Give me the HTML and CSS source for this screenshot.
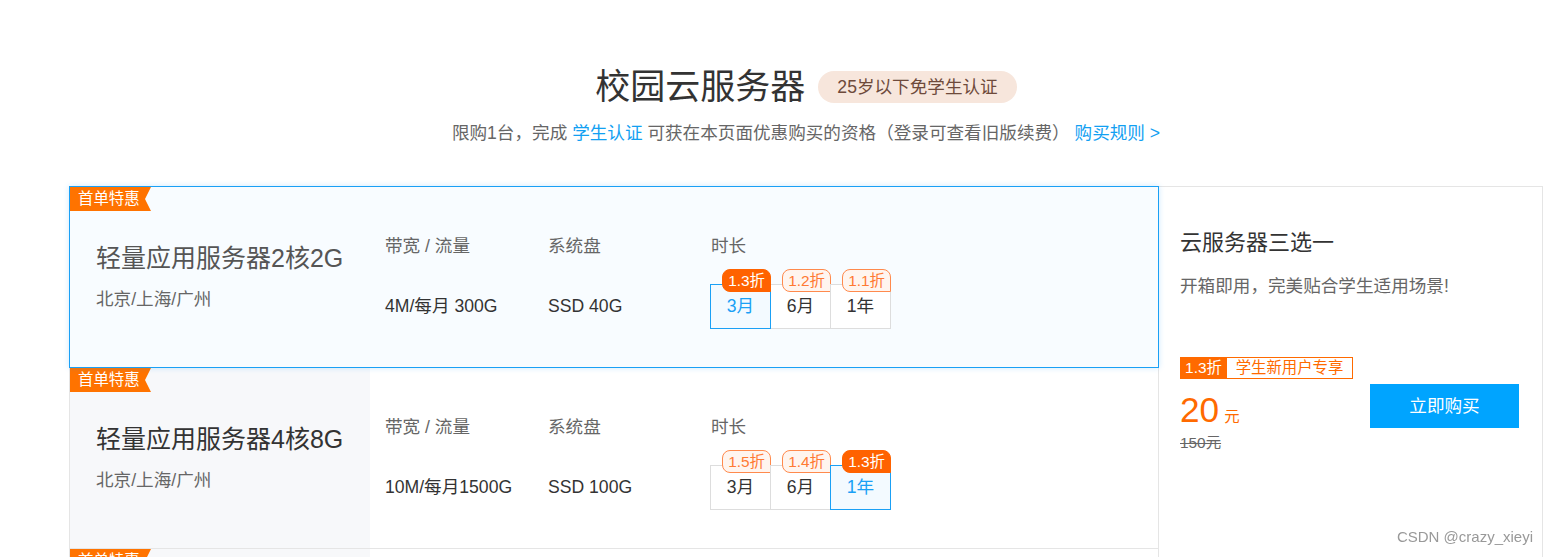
FILE: index.html
```html
<!DOCTYPE html>
<html lang="zh-CN">
<head>
<meta charset="utf-8">
<title>校园云服务器</title>
<link rel="stylesheet" href="styles.css">
</head>
<body>
<div class="page">
  <header class="head">
    <div class="title-row">
      <h1 class="title">校园云服务器</h1>
      <span class="age">25岁以下免学生认证</span>
    </div>
    <p class="sub">限购1台，完成 <a class="link">学生认证</a> 可获在本页面优惠购买的资格（登录可查看旧版续费） <a class="link">购买规则 &gt;</a></p>
  </header>

  <div class="main">
    <div class="list">
      <div class="card active">
        <span class="ribbon">首单特惠</span>
        <div class="info">
          <div class="name">轻量应用服务器2核2G</div>
          <div class="region">北京/上海/广州</div>
        </div>
        <div class="specs">
          <div class="col"><div class="label">带宽 / 流量</div><div class="val">4M/每月 300G</div></div>
          <div class="col"><div class="label">系统盘</div><div class="val">SSD 40G</div></div>
          <div class="col">
            <div class="label">时长</div>
            <div class="opts">
              <div class="opt on">3月<span class="off">1.3折</span></div>
              <div class="opt">6月<span class="off">1.2折</span></div>
              <div class="opt">1年<span class="off">1.1折</span></div>
            </div>
          </div>
        </div>
      </div>

      <div class="card">
        <span class="ribbon">首单特惠</span>
        <div class="info">
          <div class="name">轻量应用服务器4核8G</div>
          <div class="region">北京/上海/广州</div>
        </div>
        <div class="specs">
          <div class="col"><div class="label">带宽 / 流量</div><div class="val">10M/每月1500G</div></div>
          <div class="col"><div class="label">系统盘</div><div class="val">SSD 100G</div></div>
          <div class="col">
            <div class="label">时长</div>
            <div class="opts">
              <div class="opt">3月<span class="off">1.5折</span></div>
              <div class="opt">6月<span class="off">1.4折</span></div>
              <div class="opt on">1年<span class="off">1.3折</span></div>
            </div>
          </div>
        </div>
      </div>

      <div class="card">
        <span class="ribbon">首单特惠</span>
        <div class="info">
          <div class="name">云服务器ECS 2核4G</div>
          <div class="region">北京/上海/广州</div>
        </div>
        <div class="specs">
          <div class="col"><div class="label">带宽 / 流量</div><div class="val">3M带宽</div></div>
          <div class="col"><div class="label">系统盘</div><div class="val">ESSD 40G</div></div>
          <div class="col">
            <div class="label">时长</div>
            <div class="opts">
              <div class="opt on">3月<span class="off">1.3折</span></div>
              <div class="opt">6月<span class="off">1.2折</span></div>
              <div class="opt">1年<span class="off">1.1折</span></div>
            </div>
          </div>
        </div>
      </div>
    </div>

    <aside class="panel">
      <div class="p-title">云服务器三选一</div>
      <div class="p-desc">开箱即用，完美贴合学生适用场景!</div>
      <div class="buy">
        <div class="buy-left">
          <div class="tag"><span class="tag-a">1.3折</span><span class="tag-b">学生新用户专享</span></div>
          <div class="price"><span class="num">20</span><span class="unit">元</span></div>
          <div class="old">150元</div>
        </div>
        <div class="btn">立即购买</div>
      </div>
    </aside>
  </div>
</div>
<div class="wm">CSDN @crazy_xieyi</div>
</body>
</html>
```

FILE: styles.css
```css
html {
  overflow: hidden;
}

body {
  margin: 0;
  font-family: "Liberation Sans", "Noto Sans CJK SC", sans-serif;
  color: #333;
  background: #fff;
}

.page {
  padding: 65px 5px 0 69px;
}

.head {
  display: flex;
  flex-direction: column;
  align-items: center;
}

.title-row {
  display: flex;
  align-items: center;
  gap: 13px;
}

.title {
  margin: 0;
  font-size: 35px;
  line-height: 44px;
  font-weight: normal;
  color: #333;
}

.age {
  height: 32px;
  line-height: 32px;
  padding: 0 19px;
  border-radius: 16px;
  background: #f7e6dc;
  color: #6e4a3b;
  font-size: 17.6px;
}

.sub {
  margin: 11px 0 0;
  font-size: 17.6px;
  line-height: 26px;
  color: #666;
}

.link {
  color: #12a0f2;
  text-decoration: none;
}

.main {
  display: flex;
  margin-top: 40px;
}

.list {
  width: 1090px;
  flex: none;
}

.card {
  position: relative;
  display: flex;
  height: 182px;
  box-sizing: border-box;
  border: 1px solid #e5e5e5;
  background: #fff;
}

.card + .card {
  margin-top: -1px;
}

.card.active {
  z-index: 1;
  border-color: #1aa0f5;
  background: #f8fcff;
  box-shadow: 0 0 6px rgba(0, 150, 255, 0.2);
}

.ribbon {
  position: absolute;
  top: 0;
  left: 0;
  width: 81px;
  height: 24px;
  line-height: 24px;
  padding-left: 8px;
  box-sizing: border-box;
  background: #ff7300;
  color: #fff;
  font-size: 15.4px;
  clip-path: polygon(0 0, 100% 0, calc(100% - 6px) 50%, 100% 100%, 0 100%);
}

.info {
  width: 300px;
  flex: none;
  box-sizing: border-box;
  padding: 55px 0 0 26px;
}

.card:not(.active) .info {
  background: #f7f8fa;
}

.name {
  font-size: 25px;
  line-height: 32px;
  color: #333;
  white-space: nowrap;
}

.active .name {
  color: #555;
}

.region {
  margin-top: 13px;
  font-size: 17.6px;
  line-height: 24px;
  color: #666;
}

.specs {
  display: flex;
  padding-left: 15px;
}

.col {
  width: 163px;
  flex: none;
  padding-top: 47px;
}

.label {
  font-size: 17.6px;
  line-height: 24px;
  color: #666;
}

.val {
  margin-top: 26px;
  font-size: 17.6px;
  line-height: 45px;
  color: #333;
  white-space: nowrap;
}

.opts {
  display: flex;
  margin-top: 26px;
  margin-left: -1px;
}

.opt {
  position: relative;
  flex: none;
  width: 61px;
  height: 45px;
  box-sizing: border-box;
  border: 1px solid #ddd;
  background: #fff;
  text-align: center;
  line-height: 43px;
  font-size: 17.6px;
  color: #333;
}

.opt + .opt {
  margin-left: -1px;
}

.opt.on {
  z-index: 1;
  border-color: #1aa0f5;
  background: #f3faff;
  color: #1aa0f5;
}

.off {
  position: absolute;
  top: -16px;
  right: -1px;
  height: 23px;
  line-height: 21px;
  padding: 0 5px;
  box-sizing: border-box;
  border: 1px solid #ff8a4d;
  border-radius: 8px 8px 0 8px;
  background: #fff5ef;
  color: #ff7a33;
  font-size: 15.4px;
  white-space: nowrap;
}

.opt.on .off {
  background: #ff6200;
  border-color: #ff6200;
  color: #fff;
}

.panel {
  flex: 1;
  border: 1px solid #e5e5e5;
  border-left: none;
  padding: 41px 23px 0 21px;
}

.p-title {
  font-size: 22px;
  line-height: 30px;
  color: #333;
}

.p-desc {
  margin-top: 15px;
  font-size: 17.6px;
  line-height: 26px;
  color: #666;
}

.buy {
  display: flex;
  justify-content: space-between;
  align-items: flex-start;
  margin-top: 58px;
}

.tag {
  display: flex;
  height: 22px;
  font-size: 15.4px;
  line-height: 20px;
}

.tag-a {
  width: 47px;
  box-sizing: border-box;
  border: 1px solid #ff6a00;
  background: #ff6a00;
  color: #fff;
  text-align: center;
}

.tag-b {
  width: 126px;
  box-sizing: border-box;
  border: 1px solid #ff6a00;
  border-left: none;
  color: #ff6a00;
  text-align: center;
}

.price {
  display: flex;
  align-items: baseline;
  height: 40px;
  margin-top: 11px;
  color: #ff6a00;
}

.num {
  font-size: 35.2px;
  line-height: 40px;
}

.unit {
  margin-left: 5px;
  font-size: 15.4px;
  line-height: 20px;
}

.old {
  margin-top: 3px;
  font-size: 15.4px;
  line-height: 20px;
  color: #666;
  text-decoration: line-through;
}

.btn {
  margin-top: 27px;
  width: 149px;
  height: 44px;
  line-height: 44px;
  background: #00a4ff;
  color: #fff;
  font-size: 17.6px;
  text-align: center;
}

.wm {
  position: fixed;
  right: 15px;
  bottom: 12px;
  font-size: 15px;
  line-height: 16px;
  color: #999;
}
```
